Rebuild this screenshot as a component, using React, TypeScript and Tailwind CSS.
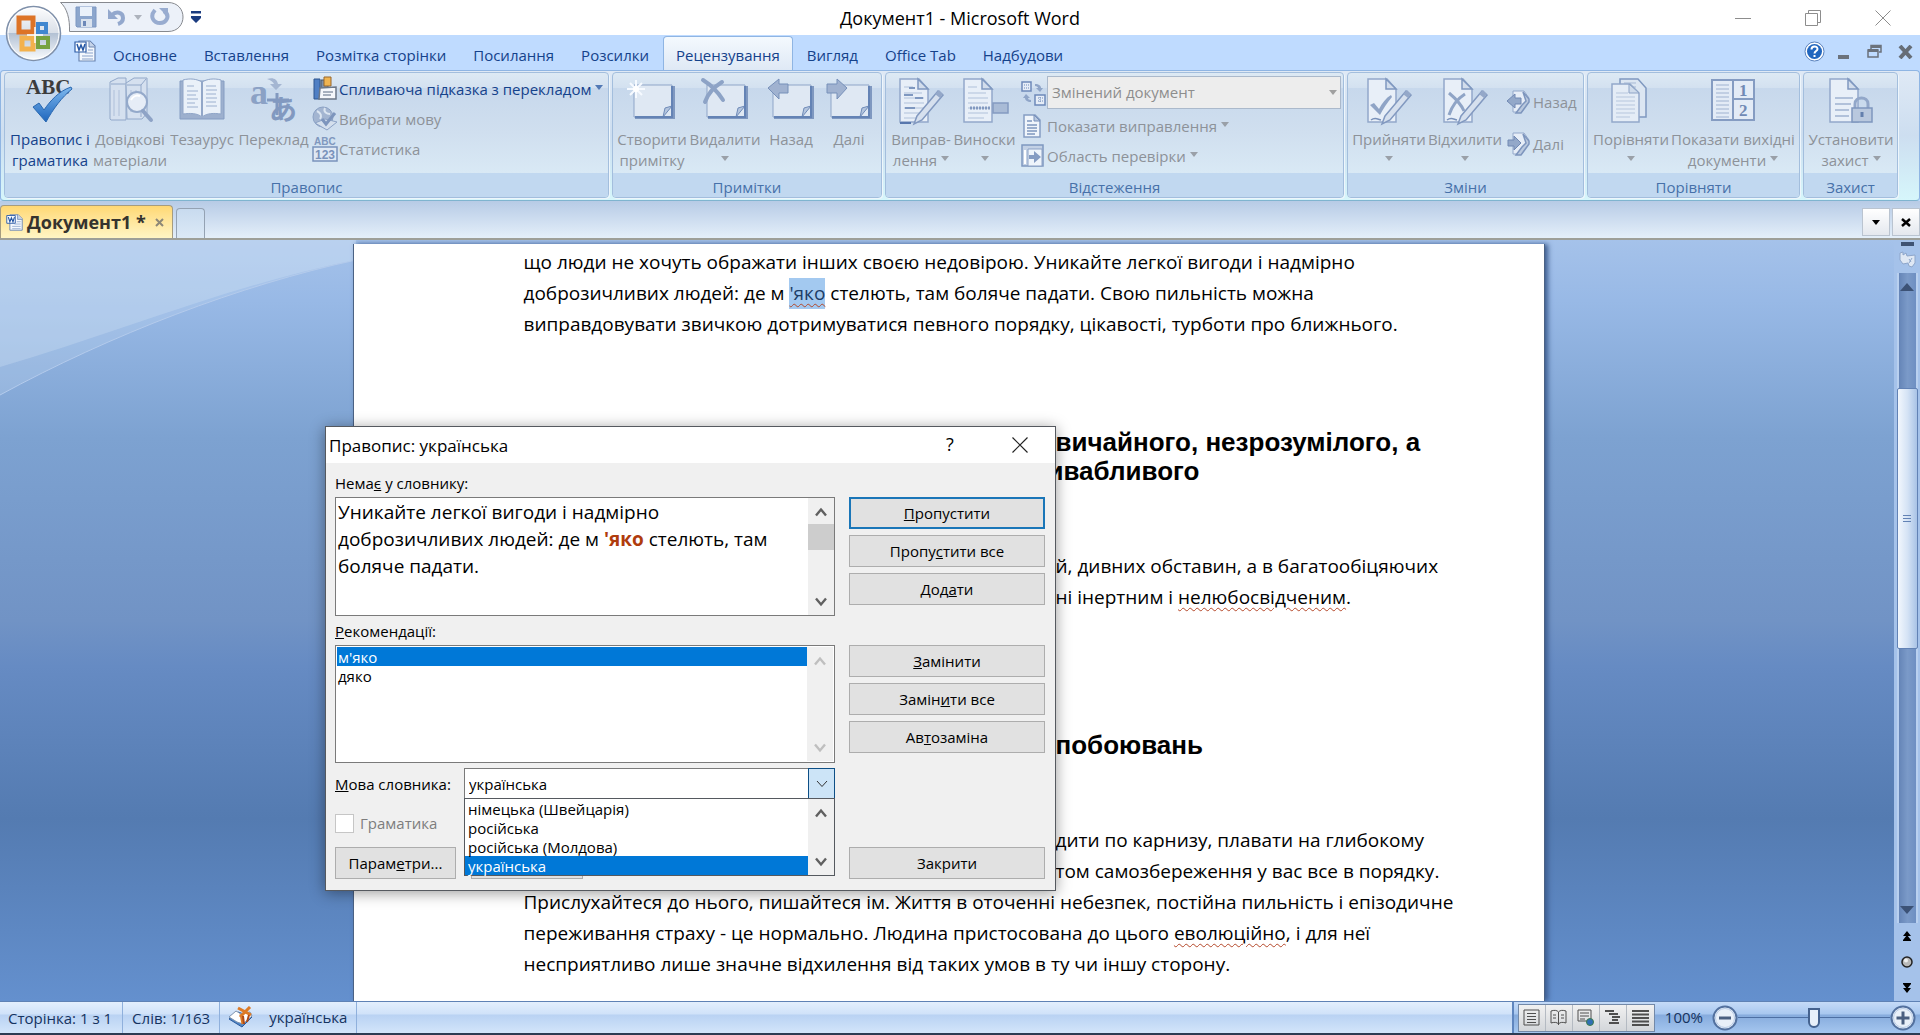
import type { ReactNode } from "react";
import clsx from "clsx";

/* ---------- small shared glyphs ---------- */

function Caret({ className }: { className?: string }) {
  return (
    <svg viewBox="0 0 8 5" className={clsx("inline-block h-[5px] w-2", className)} fill="currentColor">
      <path d="M0 0h8L4 5z" />
    </svg>
  );
}

function Chevron({ up, className }: { up?: boolean; className?: string }) {
  return (
    <svg viewBox="0 0 12 10" className={clsx("h-[10px] w-3", className)} fill="none" stroke="currentColor" strokeWidth="2.4">
      <path d={up ? "M1 8.5 6 2.5l5 6" : "M1 1.5 6 7.5l5-6"} />
    </svg>
  );
}

function Art({ children, size = "large" }: { children: ReactNode; size?: "large" | "small" }) {
  return size === "large" ? (
    <svg viewBox="0 0 48 48" className="size-12 shrink-0 overflow-visible">
      {children}
    </svg>
  ) : (
    <svg viewBox="0 0 26 26" className="size-[26px] shrink-0 overflow-visible">
      {children}
    </svg>
  );
}

/* ---------- ribbon icons ---------- */

const SpellingIcon = () => (
  <Art>
    <defs>
      <linearGradient id="tick" x1="0" y1="0" x2="0" y2="1">
        <stop offset="0" stopColor="#7db8ee" />
        <stop offset="1" stopColor="#1f66bd" />
      </linearGradient>
    </defs>
    <text x="0" y="17" fontFamily="Liberation Serif" fontWeight="bold" fontSize="21" fill="#3c3c3c">
      ABC
    </text>
    <path d="M7 30l6-4 5 7C24 24 33 14 45 10l1 2C36 20 27 32 20 45z" fill="url(#tick)" stroke="#2a68b0" strokeWidth="1" />
  </Art>
);

const ResearchIcon = () => (
  <Art>
    <g fill="#d5e0ef" stroke="#92a8c9">
      <path d="M4 5l8-4h8v42H5l-1-1z" />
      <path d="M20 6l8-5h13v35l-5 6H21z" />
      <path d="M5 7h14M21 8h14v32M35 8l5-6" fill="none" />
      <path d="M8 13v26M13 13v26M25 13v22M30 13v10" fill="none" stroke="#aebfd9" />
    </g>
    <circle cx="31" cy="25" r="10" fill="#e6edf7" stroke="#94a9ca" strokeWidth="2" />
    <path d="M37 34l8 9" stroke="#8ea3c6" strokeWidth="4" strokeLinecap="round" />
    <path d="M25 23c2-4 6-5 9-4" stroke="#fff" strokeWidth="2" fill="none" />
  </Art>
);

const ThesaurusIcon = () => (
  <Art>
    <path d="M2 4h44v38H2z" fill="#9db0ce" stroke="#859dc2" />
    <path d="M5 3c7-2 14-1 19 2 5-3 12-4 19-2v34c-7-1-14-1-19 3-5-4-12-4-19-3z" fill="#eaf1f9" stroke="#90a6c8" />
    <path d="M24 5v34" stroke="#92a7c8" strokeWidth="2" />
    <path d="M9 9h7M9 14h11M9 18h9M9 22h11M9 26h8M9 30h11M28 9h10M28 13h11M28 17h10M28 21h11M28 25h10M28 29h11" stroke="#9cb0cf" />
  </Art>
);

const TranslateIcon = () => (
  <Art>
    <text x="0" y="27" fontFamily="Liberation Serif" fontWeight="bold" fontSize="36" fill="#8ba1c5">
      a
    </text>
    <path d="M17 23h22M27 16v22" stroke="#8299c0" strokeWidth="3" />
    <text x="19" y="43" fontFamily="'Noto Sans CJK JP'" fontWeight="bold" fontSize="28" fill="#8299c0">
      あ
    </text>
    <path d="M17 2c6-2 10 0 11 5h4l-6 6-6-6h4c-1-2-3-4-7-5z" fill="#a4b6d2" />
  </Art>
);

/* blank sticky note that the comment buttons build on */
const Note = () => (
  <>
    <path d="M7 9h40v33H7z" fill="#7f98c0" />
    <path d="M6 8h38v32H6z" fill="#dfe8f3" stroke="#8fa5c8" />
    <path d="M35 40l2-9 7-2z" fill="#b4c5de" stroke="#6f8bb8" />
    <path d="M44 9v31H7" stroke="#6483b5" strokeWidth="2" fill="none" />
  </>
);

const NewCommentIcon = () => (
  <Art>
    <Note />
    <path d="M8 3v18M-1 12h18M2 6l12 12M14 6L2 18" stroke="#f6faff" strokeWidth="2" />
    <circle cx="8" cy="12" r="3" fill="#fff" />
  </Art>
);
const DeleteCommentIcon = () => (
  <Art>
    <Note />
    <path d="M2 3c8 5 15 12 20 20M21 5C13 10 7 16 4 25" stroke="#8da3c6" strokeWidth="4" fill="none" strokeLinecap="round" />
  </Art>
);
const PreviousCommentIcon = () => (
  <Art>
    <Note />
    <path d="M1 11L12 2v5h9v9h-9v6z" fill="#a0b2d0" stroke="#7790b9" />
  </Art>
);
const NextCommentIcon = () => (
  <Art>
    <Note />
    <path d="M22 11L12 2v5H2v9h10v6z" fill="#a0b2d0" stroke="#7790b9" />
  </Art>
);

function Sheet({ lines = true }: { lines?: boolean }) {
  return (
    <>
      <path d="M3 2h19l9 10v33H3z" fill="#e8eff8" stroke="#92a8ca" strokeWidth="1.5" />
      <path d="M21 2v10h10z" fill="#d2ddec" stroke="#7f98c0" strokeWidth="1.5" />
      {lines && <path d="M7 10h9M7 16h18M7 21h20M7 26h20M7 31h20M7 36h20M7 41h16" stroke="#b0c1da" />}
    </>
  );
}

const Pencil = () => (
  <>
    <path d="M20 39L41 14l5 4-21 25-8 4z" fill="#d6e0ee" stroke="#8299c0" strokeWidth="1.5" />
    <path d="M38 17l4-4 4 4-3 4z" fill="#94a8c9" />
  </>
);

const TrackIcon = () => (
  <Art>
    <Sheet />
    <path d="M12 11h6M7 18h9M18 21h8M8 31h10" stroke="#7f98c0" strokeWidth="2" />
    <path d="M3 46h11" stroke="#5877ad" strokeWidth="2" />
    <Pencil />
  </Art>
);
const BalloonsIcon = () => (
  <Art>
    <Sheet />
    <path d="M9 31h21" stroke="#8299c0" strokeWidth="3" strokeDasharray="2 1" />
    <path d="M32 26h15v10H32z" fill="#a9bbd6" stroke="#849bc1" strokeWidth="1.5" />
  </Art>
);
const AcceptIcon = () => (
  <Art>
    <Sheet lines={false} />
    <path d="M5 28l4-2 5 6c3-6 7-11 12-14l1 2c-5 6-9 12-12 18z" fill="#8fa4c6" />
    <Pencil />
    <path d="M6 43c4-3 6-1 10 0" stroke="#7991ba" fill="none" strokeWidth="1.5" />
  </Art>
);
const RejectIcon = () => (
  <Art>
    <Sheet lines={false} />
    <path d="M8 16c6 5 12 11 15 18M24 17C16 22 11 29 8 38" stroke="#8fa4c6" strokeWidth="3" fill="none" />
    <Pencil />
    <path d="M6 43c4-3 6-1 10 0" stroke="#7991ba" fill="none" strokeWidth="1.5" />
  </Art>
);
const CompareIcon = () => (
  <Art>
    <path d="M13 2h18l8 9v29H13z" fill="#dce6f2" stroke="#7f98c0" strokeWidth="1.5" />
    <path d="M17 6h12M17 10h12" stroke="#a7b9d5" />
    <path d="M5 7h18l9 9v29H5z" fill="#e4ecf6" stroke="#92a8ca" strokeWidth="1.5" />
    <path d="M22 7v9h10z" fill="#cfdbeb" stroke="#8da3c6" />
    <path d="M9 16h12M9 20h19M9 24h19M9 28h19M9 32h19M9 36h19M9 40h14" stroke="#b6c6dd" />
  </Art>
);
const SourceIcon = () => (
  <Art>
    <path d="M3 3h42v40H3z" fill="#e3ebf6" stroke="#859cc2" strokeWidth="2" />
    <path d="M24 3v40M24 22h21" stroke="#859cc2" strokeWidth="2" />
    <path d="M7 8h13M7 12h13M7 16h13M7 20h13M7 24h13M7 28h13M7 32h13M7 36h13M7 40h13" stroke="#9fb2d0" />
    <text x="30" y="19" fontFamily="Liberation Serif" fontWeight="bold" fontSize="17" fill="#718ab5">
      1
    </text>
    <text x="30" y="39" fontFamily="Liberation Serif" fontWeight="bold" fontSize="17" fill="#718ab5">
      2
    </text>
  </Art>
);
const ProtectIcon = () => (
  <Art>
    <Sheet lines={false} />
    <path d="M8 21h18M8 27h16M8 33h14M8 39h14" stroke="#9fb2d0" strokeWidth="1.5" />
    <path d="M28 32v-5c0-8 13-8 13 0v5" fill="none" stroke="#92a7c9" strokeWidth="3" />
    <path d="M25 31h20v14H25z" fill="#b9c8de" stroke="#7f97be" strokeWidth="1.5" />
    <path d="M35 35v5" stroke="#637fad" strokeWidth="3" />
  </Art>
);

const TooltipIcon = () => (
  <Art size="small">
    <path d="M2 3h6v20H2z" fill="#4f7fc4" stroke="#2f568f" />
    <path d="M9 4h7v12H9z" fill="#7c8ea8" stroke="#48566b" />
    <path d="M12 1h7v9h-7z" fill="#f0b450" stroke="#96662c" />
    <path d="M8 12l16-1v12H7z" fill="#f5f7fb" stroke="#6b7788" strokeWidth="1.5" />
    <path d="M11 16h10M11 19h8" stroke="#5b6b82" />
  </Art>
);
const LanguageIcon = () => (
  <Art size="small">
    <circle cx="11" cy="11" r="10" fill="#a3b5d1" stroke="#8ba1c4" />
    <path d="M5 5c4 2 5 5 3 8M13 2c-2 4 2 6 5 6" stroke="#dbe5f1" strokeWidth="2" fill="none" />
    <path d="M3 17l10-4 12 3-10 8z" fill="#d4dfed" stroke="#8ca2c5" />
    <path d="M10 13l4 5 9-11" stroke="#7d95bd" strokeWidth="3" fill="none" />
  </Art>
);
const StatsIcon = () => (
  <Art size="small">
    <text x="2" y="9" fontFamily="Liberation Sans" fontWeight="bold" fontSize="10" fill="#7f97be">
      ABC
    </text>
    <path d="M1 11h24v14H1z" fill="#dfe8f4" stroke="#7a93bc" strokeWidth="1.5" />
    <text x="3" y="23" fontFamily="Liberation Sans" fontWeight="bold" fontSize="12" fill="#7a92bb">
      123
    </text>
  </Art>
);
const DisplayIcon = () => (
  <Art size="small">
    <path d="M2 2h9v9H2zM15 15h10v10H15z" fill="#e6edf7" stroke="#6d89b9" strokeWidth="1.5" />
    <path d="M4 5h5M4 8h5M18 18h5M18 21h5M20 17v6" stroke="#6d89b9" strokeDasharray="1 1" />
    <path d="M15 4c4 0 6 2 6 4h2l-3 4-4-4h2c0-1-1-2-3-2zM11 22c-4 0-6-2-6-4H3l3-4 4 4H8c0 1 1 2 3 2z" fill="#8fa5c8" />
  </Art>
);
const MarkupIcon = () => (
  <Art size="small">
    <path d="M4 2h11l5 5v17H4z" fill="#f0f5fb" stroke="#859dc3" strokeWidth="1.5" />
    <path d="M14 2v6h6z" fill="#b9c9e0" stroke="#7890ba" />
    <path d="M7 8h5M7 12h10M7 15h10M7 18h10M7 21h8" stroke="#7e96be" strokeWidth="1.5" />
  </Art>
);
const PaneIcon = () => (
  <Art size="small">
    <path d="M2 2h21v21H2z" fill="#c3d1e5" stroke="#7f98c0" strokeWidth="1.5" />
    <path d="M8 6h14v17H8z" fill="#eef4fb" stroke="#8ba1c5" />
    <path d="M5 7v14" stroke="#fff" strokeWidth="2" />
    <path d="M9 12h5V8l7 6-7 6v-4H9z" fill="#859cc3" />
  </Art>
);
const ChangeNavIcon = ({ back }: { back?: boolean }) => (
  <Art size="small">
    <path d="M7 2h11l5 7-7 7-3 7H7z" fill="#e6edf7" stroke="#93a8ca" />
    <path d="M17 3l6 7v3l-8 11h-5l6-8 4-4z" fill="#b9c8de" stroke="#7d95bd" strokeWidth="1.5" />
    <path d={back ? "M1 12l8-7v4h6v6H9v4z" : "M15 12L8 5v4H2v6h6v4z"} fill="#93a8c9" stroke="#7088b3" />
  </Art>
);

/* ---------- ribbon parts ---------- */

interface BigButtonProps {
  icon: ReactNode;
  lines: string[];
  width: string;
  menu?: boolean;
  active?: boolean;
}

function BigButton({ icon, lines, width, menu, active }: BigButtonProps) {
  return (
    <button
      type="button"
      disabled={!active}
      className={clsx(
        "flex shrink-0 flex-col items-center pt-1 leading-[21px] whitespace-nowrap",
        width,
        active ? "text-[#15428b]" : "text-[#8d9299]"
      )}
    >
      <span className="mb-1">{icon}</span>
      <span>{lines[0]}</span>
      <span className="flex h-[21px] items-center">
        {lines[1]}
        {menu && <Caret className={clsx("mb-1 text-[#9aa0a8]", lines[1] && "ml-1")} />}
      </span>
    </button>
  );
}

function SmallButton({ icon, label, menu, active }: { icon: ReactNode; label: string; menu?: boolean; active?: boolean }) {
  return (
    <button
      type="button"
      disabled={!active}
      className={clsx(
        "flex h-[30px] items-center whitespace-nowrap",
        active ? "text-[#15428b]" : "text-[#8d9299]"
      )}
    >
      {icon}
      <span className="ml-px">{label}</span>
      {menu && <Caret className={clsx("mb-1 ml-1", active ? "text-[#5279b5]" : "text-[#9aa0a8]")} />}
    </button>
  );
}

function Group({ title, width, children }: { title: string; width: string; children: ReactNode }) {
  return (
    <section
      className={clsx(
        "flex shrink-0 flex-col rounded-[4px] border border-[#a3bedd] bg-[linear-gradient(#dde9f4_0,#d3e1f0_15px,#c7d8ec_15px,#d0dfef_60px,#d9e9f5_100px)] shadow-[1px_1px_0_#eef6fc]",
        width
      )}
    >
      <div className="flex h-[101px] pl-1">{children}</div>
      <h2 className="h-6 rounded-b-[3px] bg-[#c1d8f0] text-center leading-7 text-[#4771a9]">{title}</h2>
    </section>
  );
}

const tabs = [
  "Основне",
  "Вставлення",
  "Розмітка сторінки",
  "Посилання",
  "Розсилки",
  "Рецензування",
  "Вигляд",
  "Office Tab",
  "Надбудови",
];

function WordFile({ className }: { className?: string }) {
  return (
    <svg viewBox="0 0 22 22" className={className}>
      <path d="M5 1h11l5 5v15H5z" fill="#f4f8fd" stroke="#6d87b3" strokeWidth="1.2" />
      <path d="M15 1v6h6" fill="#c5d4ea" stroke="#6d87b3" />
      <path d="M11 13h8M8 16h11M8 19h11M14 10h5" stroke="#8aa3cb" />
      <path d="M1 2h11v10H1z" fill="#fff" stroke="#2d5ca6" strokeWidth="1.2" />
      <path d="M3 4l2 6 2-5 2 5 2-6" fill="none" stroke="#2557a5" strokeWidth="1.5" />
    </svg>
  );
}

function OfficeButton() {
  return (
    <button type="button" aria-label="Office" className="absolute top-[5px] left-[5px] size-[57px]">
      <svg viewBox="0 0 57 57">
        <defs>
          <linearGradient id="orb" x1="0" y1="0" x2="0" y2="1">
            <stop offset="0" stopColor="#fdfdfe" />
            <stop offset="0.49" stopColor="#d9dfe8" />
            <stop offset="0.5" stopColor="#b3c1d4" />
            <stop offset="1" stopColor="#fbfdff" />
          </linearGradient>
        </defs>
        <circle cx="28.5" cy="28.5" r="27" fill="url(#orb)" stroke="#7f90aa" strokeWidth="1.5" />
        <circle cx="28.5" cy="28.5" r="25.5" fill="none" stroke="#fff" />
        <g fill="none">
          <rect x="14" y="13" width="14" height="14" stroke="#dd7326" strokeWidth="5" />
          <rect x="17" y="33" width="11" height="11" stroke="#f3b14d" strokeWidth="5" />
          <rect x="33" y="19" width="8" height="8" stroke="#4087d0" strokeWidth="4" />
          <rect x="33" y="33" width="10" height="9" stroke="#77a240" strokeWidth="4" />
          <path d="M30 30v-8M30 30h-8M30 30h8M30 30v8" stroke="#fff" strokeWidth="1.5" />
        </g>
      </svg>
    </button>
  );
}

function TitleBar() {
  return (
    <header className="grid h-[35px] grid-cols-[1fr_auto_1fr] items-center bg-white">
      <div className="relative h-[35px]">
        <svg viewBox="0 0 124 31" className="absolute top-[2px] left-[60px] h-[31px] w-[124px]">
          <path d="M.5.5H108c20 0 20 29 0 29H9.500C10 17 7 6 .5.5z" fill="#ecf1f9" stroke="#86898f" />
        </svg>
        <div className="absolute top-0 left-[75px] flex h-[34px] items-center">
          <button type="button" aria-label="Зберегти">
            <svg viewBox="0 0 22 22" className="size-[22px]">
              <path d="M1 1h20v20H2l-1-1z" fill="#8ca6cd" stroke="#7d97c2" />
              <path d="M5 1h12v9H5z" fill="#eaf1fa" />
              <path d="M6 13h11v8H6z" fill="#d9e2ee" />
              <path d="M8 15h3v5H8z" fill="#6d88b8" />
            </svg>
          </button>
          <button type="button" aria-label="Скасувати" className="ml-[11px]">
            <svg viewBox="0 0 18 18" className="size-[18px]" fill="none" stroke="#93a8cd" strokeWidth="4">
              <path d="M4 7c4-4 11-3 11 3 0 3-2 5-5 6" />
              <path d="M0 1v10h10z" fill="#93a8cd" stroke="none" />
            </svg>
          </button>
          <Caret className="ml-2 text-[#adb3bd]" />
          <button type="button" aria-label="Повторити" className="ml-2">
            <svg viewBox="0 0 20 20" className="size-5" fill="none" stroke="#98acd0" strokeWidth="4">
              <path d="M5 3c-6 7-1 13 5 13s11-7 4-12" />
              <path d="M9 1h9v9z" fill="#98acd0" stroke="none" />
            </svg>
          </button>
          <button type="button" aria-label="Настроїти панель" className="ml-[21px]">
            <svg viewBox="0 0 10 12" className="h-3 w-[10px]" fill="#1b3c80">
              <path d="M0 0h10v2.500H0zM0 5h10v2L5 12 0 7z" />
            </svg>
          </button>
        </div>
      </div>
      <h1 className="text-[18px] leading-7 text-black">Документ1 - Microsoft Word</h1>
      <div className="flex h-[33px] justify-end pr-[2px] text-[#8d8d8d]">
        <button type="button" aria-label="Згорнути" className="flex w-[70px] items-center justify-center">
          <svg viewBox="0 0 16 16" className="size-4" stroke="currentColor">
            <path d="M0 8.5h16" />
          </svg>
        </button>
        <button type="button" aria-label="Відновити" className="flex w-[70px] items-center justify-center">
          <svg viewBox="0 0 16 16" className="size-4" stroke="currentColor" fill="none">
            <path d="M.5 3.5h12v12H.5zM3.5 3V.5h12v12H13" />
          </svg>
        </button>
        <button type="button" aria-label="Закрити вікно" className="flex w-[70px] items-center justify-center">
          <svg viewBox="0 0 16 16" className="size-4" stroke="currentColor">
            <path d="M.5.5l15 15M15.5.5l-15 15" />
          </svg>
        </button>
      </div>
    </header>
  );
}

function TabStrip() {
  return (
    <nav className="flex h-[35px] items-end bg-[#bfdbff] pl-[74px]">
      <WordFile className="mr-1 mb-2 size-[22px]" />
      {tabs.map((tab) => (
        <button
          key={tab}
          type="button"
          className={clsx(
            "mr-px h-[34px] rounded-t-[4px] border border-b-0 px-3 pt-1 leading-[21px] text-[#15428b]",
            tab === "Рецензування"
              ? "border-[#8fb5e3] bg-gradient-to-b from-[#f4f9fe] to-[#dfe9f5]"
              : "border-transparent"
          )}
        >
          {tab}
        </button>
      ))}
      <div className="ml-auto flex h-[35px] items-center gap-3 pr-[7px] pb-[2px]">
        <button type="button" aria-label="Довідка" className="mr-px">
          <svg viewBox="0 0 21 21" className="size-[21px]">
            <circle cx="10.5" cy="10.5" r="9.5" fill="#fff" stroke="#5c83bd" />
            <circle cx="10.5" cy="10.5" r="7.5" fill="#2166be" />
            <path d="M7.5 8.5c0-4 6-4 6-.5 0 2-3 2-3 4.5M10.5 14v2" fill="none" stroke="#fff" strokeWidth="2" />
          </svg>
        </button>
        <svg viewBox="0 0 11 16" className="h-4 w-[11px]">
          <path d="M0 11h11v4H0z" fill="#6b727c" />
        </svg>
        <svg viewBox="0 0 15 15" className="ml-[6px] size-[15px]" fill="none" stroke="#6b727c" strokeWidth="1.5">
          <path d="M4 5V1.500h10V8h-2" />
          <path d="M4 2.5h10M1 6.500h10" strokeWidth="3" />
          <path d="M1 6h10v7H1z" />
        </svg>
        <svg viewBox="0 0 15 14" className="ml-1 h-[14px] w-[15px]" stroke="#666d77" strokeWidth="4">
          <path d="M2 1l11 12M13 1L2 13" />
        </svg>
      </div>
    </nav>
  );
}

function Ribbon() {
  return (
    <div className="flex h-[131px] gap-[3px] rounded-[4px] border border-[#8fb5e3] border-b-[#7fb4cf] bg-gradient-to-b from-[#dfe9f5] via-[#cddef0] to-[#d6f6fb] px-[3px] pt-px pb-[2px]">
      <Group title="Правопис" width="w-[605px]">
        <BigButton active width="w-[82px]" icon={<SpellingIcon />} lines={["Правопис і", "граматика"]} />
        <BigButton width="w-[78px]" icon={<ResearchIcon />} lines={["Довідкові", "матеріали"]} />
        <BigButton width="w-[66px]" icon={<ThesaurusIcon />} lines={["Тезаурус"]} />
        <BigButton width="w-[77px]" icon={<TranslateIcon />} lines={["Переклад"]} />
        <div className="flex flex-col pt-px">
          <SmallButton active menu icon={<TooltipIcon />} label="Спливаюча підказка з перекладом" />
          <SmallButton icon={<LanguageIcon />} label="Вибрати мову" />
          <SmallButton icon={<StatsIcon />} label="Статистика" />
        </div>
      </Group>
      <Group title="Примітки" width="w-[270px]">
        <BigButton width="w-[70px]" icon={<NewCommentIcon />} lines={["Створити", "примітку"]} />
        <BigButton menu width="w-[76px]" icon={<DeleteCommentIcon />} lines={["Видалити"]} />
        <BigButton width="w-14" icon={<PreviousCommentIcon />} lines={["Назад"]} />
        <BigButton width="w-[60px]" icon={<NextCommentIcon />} lines={["Далі"]} />
      </Group>
      <Group title="Відстеження" width="w-[459px]">
        <BigButton menu width="w-[62px]" icon={<TrackIcon />} lines={["Виправ-", "лення"]} />
        <BigButton menu width="w-[65px]" icon={<BalloonsIcon />} lines={["Виноски"]} />
        <div className="flex flex-1 flex-col pt-[3px] pr-[2px] pl-[3px]">
          <div className="mb-[2px] flex h-[33px] items-center">
            <DisplayIcon />
            <span className="relative ml-px flex-1">
              <select
                disabled
                aria-label="Показати для рецензування"
                className="block h-[33px] w-full appearance-none border border-[#abb9cb] bg-[#ededed] pl-1 text-[#8d8d8d] opacity-100"
              >
                <option>Змінений документ</option>
              </select>
              <Caret className="absolute top-[14px] right-1 text-[#a0a0a0]" />
            </span>
          </div>
          <SmallButton menu icon={<MarkupIcon />} label="Показати виправлення" />
          <SmallButton menu icon={<PaneIcon />} label="Область перевірки" />
        </div>
      </Group>
      <Group title="Зміни" width="w-[237px]">
        <BigButton menu width="w-[74px]" icon={<AcceptIcon />} lines={["Прийняти"]} />
        <BigButton menu width="w-[78px]" icon={<RejectIcon />} lines={["Відхилити"]} />
        <div className="flex flex-col gap-3 pt-[14px] pl-[2px]">
          <SmallButton icon={<ChangeNavIcon back />} label="Назад" />
          <SmallButton icon={<ChangeNavIcon />} label="Далі" />
        </div>
      </Group>
      <Group title="Порівняти" width="w-[213px]">
        <BigButton menu width="w-[78px]" icon={<CompareIcon />} lines={["Порівняти"]} />
        <BigButton menu width="w-[126px]" icon={<SourceIcon />} lines={["Показати вихідні", "документи"]} />
      </Group>
      <Group title="Захист" width="w-[95px]">
        <BigButton menu width="w-[86px]" icon={<ProtectIcon />} lines={["Установити", "захист"]} />
      </Group>
    </div>
  );
}

function DocumentTabs() {
  return (
    <div className="flex h-[39px] items-end border-b-2 border-[#9d9f98] bg-gradient-to-b from-[#b7cbe6] to-[#e4eff9]">
      <div className="flex h-[33px] w-[173px] items-center rounded-t-[4px] border border-b-0 border-[#a59c80] bg-gradient-to-b from-[#ffd873] to-[#fff5c4] pl-[5px]">
        <WordFile className="size-[17px]" />
        <span className="ml-1 text-[18px] font-bold whitespace-nowrap text-[#35332e]">Документ1 *</span>
        <button type="button" aria-label="Закрити вкладку" className="ml-[9px]">
          <svg viewBox="0 0 9 9" className="size-[9px]" stroke="#8d8877" strokeWidth="2">
            <path d="M1 1l7 7M8 1L1 8" />
          </svg>
        </button>
      </div>
      <button
        type="button"
        aria-label="Нова вкладка"
        className="ml-[3px] h-[30px] w-[29px] rounded-t-[4px] border border-b-0 border-[#94a2b3] bg-gradient-to-b from-[#c8dbef] to-[#dce9f6]"
      />
      <div className="mb-[2px] ml-auto flex gap-[2px]">
        <button type="button" aria-label="Список вкладок" className="flex h-7 w-7 items-center justify-center border border-[#bac4d0] bg-gradient-to-b from-white to-[#e4e8ee]">
          <Caret className="text-black" />
        </button>
        <button type="button" aria-label="Закрити документ" className="flex h-7 w-7 items-center justify-center border border-[#bac4d0] bg-gradient-to-b from-white to-[#e4e8ee]">
          <svg viewBox="0 0 10 9" className="h-[9px] w-[10px]" stroke="#000" strokeWidth="2.5">
            <path d="M1 1l8 7M9 1L1 8" />
          </svg>
        </button>
      </div>
    </div>
  );
}

/* ---------- document ---------- */

function Typo({ children }: { children: ReactNode }) {
  return (
    <span className="underline decoration-[#b5482a] decoration-wavy decoration-1 underline-offset-[3px]">{children}</span>
  );
}

function Page() {
  return (
    <article className="mx-auto mt-1 w-[1192px] shrink-0 overflow-hidden border-x border-[#4b6284] bg-white pt-[3px] pl-[170px] text-[19px] leading-[31px] whitespace-nowrap text-black shadow-[3px_0_5px_#3c5c8e]">
      <p>
        що люди не хочуть ображати інших своєю недовірою. Уникайте легкої вигоди і надмірно
        <br />
        доброзичливих людей: де м{" "}
        <span className="inline-block bg-[#a3c9f0] text-[#1d3d66]">
          <Typo>'яко</Typo>
        </span>{" "}
        стелють, там боляче падати. Свою пильність можна
        <br />
        виправдовувати звичкою дотримуватися певного порядку, цікавості, турботи про ближнього.
      </p>
      <h2 className="mt-[88px] pl-[532px] font-['Liberation_Sans',sans-serif] text-[26px] leading-[29px] font-bold">
        вичайного, незрозумілого, а
        <br />
        <span className="-ml-2">ивабливого</span>
      </h2>
      <p className="mt-[65px] pl-[532px]">
        й, дивних обставин, а в багатообіцяючих
        <br />
        ні інертним і <Typo>нелюбосвідченим</Typo>.
      </p>
      <h2 className="mt-[118px] pl-[532px] font-['Liberation_Sans',sans-serif] text-[26px] leading-[29px] font-bold">
        побоювань
      </h2>
      <p className="mt-[65px] pl-[532px]">
        дити по карнизу, плавати на глибокому
        <br />
        том самозбереження у вас все в порядку.
      </p>
      <p>
        Прислухайтеся до нього, пишайтеся ім. Життя в оточенні небезпек, постійна пильність і епізодичне
        <br />
        переживання страху - це нормально. Людина пристосована до цього <Typo>еволюційно</Typo>, і для неї
        <br />
        несприятливо лише значне відхилення від таких умов в ту чи іншу сторону.
      </p>
    </article>
  );
}

function VerticalScroll() {
  return (
    <div className="flex w-[26px] shrink-0 flex-col items-center bg-[#a5c2ea] pt-[2px]">
      <div className="h-1 w-[13px] bg-[#3f5373]" />
      <svg viewBox="0 0 17 18" className="mt-[5px] mb-1 h-[18px] w-[17px]">
        <path d="M1 2l3-1v3l3-2 1 3 8-1v8l-3 4-3-1-1-3-5 1-3-4z" fill="#dfe8f4" stroke="#8ea6ca" />
        <path d="M10 8l2 3M13 7l-3 5" stroke="#8ea6ca" />
      </svg>
      <div className="flex w-[21px] flex-1 flex-col items-center border-x-2 border-[#b9d0ef] bg-gradient-to-r from-[#6585b7] via-[#7b9ac8] to-[#6e8fc2]">
        <button type="button" aria-label="Угору" className="h-7">
          <svg viewBox="0 0 14 8" className="h-2 w-[14px]" fill="#3c5276">
            <path d="M0 8l7-8 7 8z" />
          </svg>
        </button>
        <div className="mt-[87px] flex h-[261px] w-[21px] flex-col items-center justify-center gap-[2px] rounded-[2px] border border-[#6282b5] bg-gradient-to-r from-[#f2f7fd] via-[#d5e3f5] to-[#a9c3e6]">
          <i className="h-px w-2 bg-[#6282b5]" />
          <i className="h-px w-2 bg-[#6282b5]" />
          <i className="h-px w-2 bg-[#6282b5]" />
        </div>
        <button type="button" aria-label="Униз" className="mt-auto h-[26px]">
          <svg viewBox="0 0 14 8" className="h-2 w-[14px]" fill="#3c5276">
            <path d="M0 0l7 8 7-8z" />
          </svg>
        </button>
      </div>
      <div className="flex h-[78px] flex-col items-center justify-between pt-2 pb-2">
        <svg viewBox="0 0 8 10" className="h-[10px] w-2">
          <path d="M4 0l4 5H0zM4 4l4 5H0zM0 9h8v1H0z" />
        </svg>
        <svg viewBox="0 0 12 12" className="size-3">
          <circle cx="6" cy="6" r="5" fill="#b9b9b9" stroke="#222" strokeWidth="1.5" />
          <circle cx="5" cy="4.5" r="2" fill="#eee" />
        </svg>
        <svg viewBox="0 0 8 10" className="h-[10px] w-2">
          <path d="M4 10l4-5H0zM4 6l4-5H0zM0 0h8v1H0z" />
        </svg>
      </div>
    </div>
  );
}

/* ---------- spelling dialog ---------- */

function DialogButton({ children, focused, className }: { children: ReactNode; focused?: boolean; className?: string }) {
  return (
    <button
      type="button"
      className={clsx(
        "h-8 bg-[#e1e1e1] leading-5",
        focused ? "border-2 border-[#1a76b8]" : "border border-[#adadad]",
        className
      )}
    >
      {children}
    </button>
  );
}

function ScrollRail({ faded, thumb, className }: { faded?: boolean; thumb?: boolean; className?: string }) {
  return (
    <div className={clsx("flex w-[26px] shrink-0 flex-col items-center bg-[#f0f0f0]", className, faded ? "text-[#bfbfbf]" : "text-[#606060]")}>
      <Chevron up />
      {thumb && <div className="mt-[7px] h-[26px] w-full bg-[#cdcdcd]" />}
      <Chevron className="mt-auto" />
    </div>
  );
}

const languages = ["німецька (Швейцарія)", "російська", "російська (Молдова)", "українська"];

function SpellingDialog() {
  return (
    <div
      role="dialog"
      aria-labelledby="dialog-title"
      className="absolute top-[426px] left-[325px] z-20 border border-[#55595f] bg-[#f0f0f0] text-black shadow-[0_2px_14px_rgba(0,0,0,0.4)]"
    >
      <div className="flex h-9 items-center bg-white pl-[3px]">
        <h2 id="dialog-title" className="pt-[2px] text-[17px]">
          Правопис: українська
        </h2>
        <button type="button" aria-label="Довідка діалогу" className="ml-auto w-[70px] pb-px text-[18px]">
          ?
        </button>
        <button type="button" aria-label="Закрити діалог" className="flex w-[70px] justify-center">
          <svg viewBox="0 0 16 16" className="size-4" stroke="#222" strokeWidth="1.2">
            <path d="M.5.5l15 15M15.5.5l-15 15" />
          </svg>
        </button>
      </div>

      <div className="flex gap-[14px] pt-[10px] pr-[10px] pb-[11px] pl-[9px] leading-5">
        <div className="w-[500px]">
          <p id="not-in-dictionary">
            Нема<u>є</u> у словнику:
          </p>
          <div className="mt-1 flex h-[119px] border border-[#7a7a7a] bg-white">
            <div
              role="textbox"
              aria-multiline="true"
              aria-labelledby="not-in-dictionary"
              tabIndex={0}
              className="flex-1 pt-px pl-[2px] text-[19px] leading-[27px] whitespace-nowrap"
            >
              Уникайте легкої вигоди і надмірно
              <br />
              доброзичливих людей: де м <b className="text-[#b03c0c]">'яко</b> стелють, там
              <br />
              боляче падати.
            </div>
            <ScrollRail thumb className="pt-[9px] pb-2" />
          </div>

          <p id="suggestions" className="mt-[5px]">
            <u>Р</u>екомендації:
          </p>
          <div className="mt-1 flex h-[118px] border border-[#7a7a7a] bg-white p-px">
            <ul role="listbox" aria-labelledby="suggestions" className="flex-1 leading-5">
              <li role="option" aria-selected="true" className="h-[19px] bg-[#0078d7] pl-px text-white">
                м'яко
              </li>
              <li role="option" aria-selected="false" className="h-[19px] pl-px">
                дяко
              </li>
            </ul>
            <ScrollRail faded className="pt-[9px] pb-2" />
          </div>

          <div className="mt-[5px] flex items-center">
            <label htmlFor="dictionary-language" className="w-[129px]">
              <u>М</u>ова словника:
            </label>
            <div className="relative flex-1">
              <select
                id="dictionary-language"
                defaultValue="українська"
                className="block h-[31px] w-full appearance-none border border-[#7a7a7a] bg-white pl-1"
              >
                <option>українська</option>
              </select>
              <span className="pointer-events-none absolute top-0 right-0 flex h-[31px] w-[27px] items-center justify-center border border-[#0d4f86] bg-[#cce4f7]">
                <svg viewBox="0 0 12 8" className="h-2 w-3" fill="none" stroke="#333">
                  <path d="M1 1l5 5.5L11 1" />
                </svg>
              </span>
              <div className="absolute top-[30px] right-0 left-0 z-10 flex border border-[#55595f] bg-white">
                <ul role="listbox" aria-label="Мови" className="flex-1 leading-5">
                  {languages.map((language) => (
                    <li
                      key={language}
                      role="option"
                      aria-selected={language === "українська"}
                      className={clsx("h-[19px] pl-[3px]", language === "українська" && "bg-[#0078d7] text-white")}
                    >
                      {language}
                    </li>
                  ))}
                </ul>
                <ScrollRail className="pt-[9px] pb-2" />
              </div>
            </div>
          </div>

          <label className="mt-[14px] flex h-5 w-[120px] items-center text-[#7d7d7d]">
            <input type="checkbox" disabled className="mr-[6px] size-[19px] appearance-none border border-[#c6c6c6] bg-white" />
            Граматика
          </label>
          <div className="mt-[14px] flex gap-[15px]">
            <DialogButton className="w-[121px]">
              Парам<u>е</u>три...
            </DialogButton>
            <button type="button" aria-label="Відмінити" disabled className="h-8 w-28 border border-[#adadad] bg-[#e1e1e1]" />
          </div>
        </div>

        <div className="flex w-[196px] flex-col gap-[6px] pt-6">
          <DialogButton focused>
            <u>П</u>ропустити
          </DialogButton>
          <DialogButton>
            Пропу<u>с</u>тити все
          </DialogButton>
          <DialogButton>
            Дод<u>а</u>ти
          </DialogButton>
          <DialogButton className="mt-[34px]">
            <u>З</u>амінити
          </DialogButton>
          <DialogButton>
            Замін<u>и</u>ти все
          </DialogButton>
          <DialogButton>
            Ав<u>т</u>озаміна
          </DialogButton>
          <DialogButton className="mt-auto">Закрити</DialogButton>
        </div>
      </div>
    </div>
  );
}

/* ---------- status bar ---------- */

const viewIcons = [
  <path key="v" d="M1 1h15v15H1zM4 4.5h9M4 7.5h9M4 10.500h9M4 13.5h9" />,
  <path key="v" d="M1 2c3-1 6-1 7.5 1C10 1 13 1 16 2v12c-3-1-6-1-7.5 1-1.5-2-4.5-2-7.5-1zM8.5 3v13M3 6h3M3 9h3M11 6h3M11 9h3" />,
  <g key="v">
    <path d="M1 1h13v11H1zM3 4h9M3 7h9M3 10h5" />
    <circle cx="13" cy="13" r="3.5" fill="#2f6fb5" stroke="#3c7c4a" />
  </g>,
  <path key="v" d="M1 2h9M5 5h9M8 8h8M8 11h6M5 14h10" strokeWidth="2" />,
  <path key="v" d="M0 2h17M0 5.5h17M0 9h17M0 12.5h17M0 16h17" strokeWidth="2" />,
];

const viewNames = ["Розмітка сторінки", "Режим читання", "Веб-документ", "Структура", "Чернетка"];

function ZoomKnob({ plus }: { plus?: boolean }) {
  return (
    <button type="button" aria-label={plus ? "Збільшити" : "Зменшити"}>
      <svg viewBox="0 0 26 26" className="size-[26px]">
        <circle cx="13" cy="13" r="11.5" fill="#e9f0f9" stroke="#53719f" strokeWidth="2" />
        <circle cx="13" cy="13" r="9.5" fill="none" stroke="#b9cce6" />
        <path d={plus ? "M6.5 13h13M13 6.5v13" : "M7 13h12"} stroke="#4a5f80" strokeWidth="3" />
      </svg>
    </button>
  );
}

function StatusBar() {
  return (
    <footer className="flex h-[34px] shrink-0 items-stretch border-t border-b-2 border-t-[#5f82b5] border-b-[#2d3b52] bg-[linear-gradient(#e3effd_0,#d0e2f9_12px,#b9d2f3_13px,#d3e5fa_100%)] leading-[33px] text-[#15335f]">
      <span className="border-r border-[#8fb0dc] pr-[10px] pl-2">Сторінка: 1 з 1</span>
      <span className="border-r border-[#8fb0dc] px-[9px]">Слів: 1/163</span>
      <span className="flex items-center border-r border-[#8fb0dc] pr-[9px] pl-2">
        <svg viewBox="0 0 26 24" className="mr-[15px] h-6 w-[26px]">
          <path d="M1 13l9-7 14 5-10 10z" fill="#4f86c8" stroke="#2b5a9c" />
          <path d="M1 11l7-6 5 3 9-2 2 4-9 8-6-2z" fill="#fff" stroke="#7f93ae" />
          <path d="M13 8l2 10M10 2l13 7M22 1L12 11" stroke="#dd7a25" strokeWidth="3" />
          <path d="M15 10l1 8M21 9l-2 7" stroke="#b04a17" strokeWidth="2" />
        </svg>
        українська
      </span>
      <div className="ml-auto flex items-center border-l-2 border-[#5f86bf] bg-[linear-gradient(#c5dbf8_0,#a8c7ef_12px,#86abdd_13px,#a5c6ef_100%)] pr-1 pl-1">
        <div className="flex h-7 border border-[#7389a8] bg-gradient-to-b from-[#f1f1f1] to-[#d3d6da]">
          {viewIcons.map((icon, i) => (
            <button
              key={viewNames[i]}
              type="button"
              aria-label={viewNames[i]}
              className="flex w-[27px] items-center justify-center border-r border-[#b4bac2] last:border-r-0"
            >
              <svg viewBox="0 0 17 17" className="size-[17px]" fill="none" stroke="#4f4f4f">
                {icon}
              </svg>
            </button>
          ))}
        </div>
        <button type="button" className="mr-[9px] ml-[10px] text-[#15335f]">
          100%
        </button>
        <ZoomKnob />
        <input
          type="range"
          aria-label="Масштаб"
          className="h-[22px] w-[152px] appearance-none bg-[linear-gradient(#4d6fa3,#4d6fa3)] bg-[length:100%_1px] bg-center bg-no-repeat [&::-webkit-slider-thumb]:h-5 [&::-webkit-slider-thumb]:w-3 [&::-webkit-slider-thumb]:appearance-none [&::-webkit-slider-thumb]:rounded-b-[6px] [&::-webkit-slider-thumb]:border-2 [&::-webkit-slider-thumb]:border-[#44628f] [&::-webkit-slider-thumb]:bg-[#e8f0fa]"
        />
        <ZoomKnob plus />
      </div>
    </footer>
  );
}

export default function App() {
  return (
    <div className="relative flex h-screen flex-col overflow-hidden bg-[#bfdbff] font-['Open_Sans','Noto_Sans',sans-serif] text-[15px]">
      <TitleBar />
      <TabStrip />
      <OfficeButton />
      <Ribbon />
      <DocumentTabs />
      <main className="flex min-h-0 flex-1 bg-[linear-gradient(#a5c2ea_0,#98b9e6_8%,#7da2d1_26%,#7193c5_50%,#668bc3_56%,#547bb1_76%,#6490ce_100%)]">
        <div className="relative flex min-w-0 flex-1 overflow-hidden">
          <svg viewBox="0 0 356 160" className="absolute top-0 left-0 h-[160px] w-[356px]">
            <path d="M0 0h356v20C240 45 110 95 0 155z" fill="#d3e5f5" fillOpacity="0.22" />
            <path d="M0 0h356v20C240 42 120 92 0 127z" fill="#d3e5f5" fillOpacity="0.3" />
            <path d="M356 20C240 45 110 95 0 155" fill="none" stroke="#b4cbec" />
          </svg>
          <div className="relative flex flex-1 pl-[3px]">
            <Page />
          </div>
        </div>
        <VerticalScroll />
      </main>
      <StatusBar />
      <SpellingDialog />
    </div>
  );
}
